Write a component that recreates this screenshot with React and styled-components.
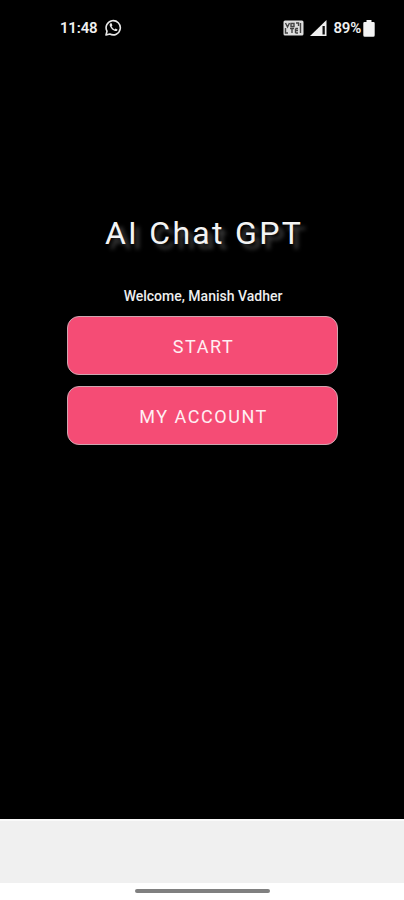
import React from "react";
import styled, { createGlobalStyle } from "styled-components";

const GlobalStyle = createGlobalStyle`
  * { box-sizing: border-box; }
  body { margin: 0; background: #fff; font-family: Roboto, sans-serif; }
`;

const Screen = styled.div`
  width: 404px;
  height: 900px;
  display: flex;
  flex-direction: column;
  background: #fff;
  overflow: hidden;
`;

const Main = styled.main`
  height: 819px;
  flex: none;
  background: #000;
  display: flex;
  flex-direction: column;
  align-items: center;
  color: #fff;
`;

const StatusBar = styled.header`
  width: 100%;
  height: 56px;
  padding: 0 29px 0 60px;
  display: flex;
  align-items: center;
  justify-content: space-between;
  color: #f0f0f0;
`;

const StatusGroup = styled.div`
  display: flex;
  align-items: center;
  gap: ${({ $gap }) => $gap}px;
  svg { display: block; flex: none; }
`;

const StatusText = styled.span`
  font-size: 15px;
  font-weight: 600;
  line-height: 18px;
  letter-spacing: ${({ $spacing }) => $spacing}px;
  white-space: nowrap;
`;

const Title = styled.h1`
  margin: 157px 0 0 4px;
  font-size: 32px;
  line-height: 40px;
  font-weight: 400;
  letter-spacing: 2.3px;
  color: #f4f4f4;
  white-space: nowrap;
  text-shadow: 5px 5px 4px rgba(255, 255, 255, 0.25);
`;

const Welcome = styled.p`
  margin: 35px 0 0 2px;
  font-size: 14px;
  font-weight: 500;
  line-height: 16px;
  white-space: nowrap;
  color: #eee;
`;

const Actions = styled.div`
  margin-top: 12px;
  width: 271px;
  margin-left: 1px;
  display: flex;
  flex-direction: column;
  gap: 11px;
`;

const ActionButton = styled.button`
  height: 59px;
  width: 100%;
  padding: 2px 0 0 2px;
  border: 1px solid #cfa5b0;
  border-radius: 12px;
  background: #f54c75;
  color: #ffeef2;
  font: 400 18px/24px Roboto, sans-serif;
  letter-spacing: 1.55px;
`;

const Footer = styled.footer`
  height: 64px;
  flex: none;
  background: #f0f0f0;
  border-top: 2px solid #fafafa;
`;

const NavigationArea = styled.div`
  flex: 1;
  display: flex;
  justify-content: center;
  padding-top: 6px;
`;

const HomeIndicator = styled.div`
  width: 135px;
  height: 4px;
  border-radius: 2px;
  background: #808080;
`;

function WhatsAppIcon() {
  return (
    <svg width="17" height="18" viewBox="0 0 17 18" fill="none">
      <path d="M1 16L2 12.2A7.1 7.1 0 1 1 4.8 15Z" stroke="#e8e8e8" strokeWidth="1.6" strokeLinejoin="round" />
      <path d="M5.5 4.3C4.4 5 4.5 6.3 5.1 7.5C6.3 9.9 7.8 11.3 10 12C11.3 12.4 12.5 11.8 12.5 10.4L10.5 9.4L9.5 10.4C8.2 9.8 7.2 8.8 6.6 7.6L7.4 6.5L6.6 4.3Z" fill="#e8e8e8" />
    </svg>
  );
}

function VolteIcon() {
  return (
    <svg width="21" height="16" viewBox="0 0 21 16" fill="none">
      <rect x=".5" y=".5" width="20" height="15" rx="1.5" fill="#dedede" />
      <path d="M2.5 3L4.5 7L6.5 3M8 3.5H11V6.5H8ZM2.5 8V13H5M7 8.5H11M9 8.5V13M12.5 8.5V13M12.5 8.5H15M12.5 10.5H15M12.5 13H15M13 3H15.5V6M17.5 3V13" stroke="#444" strokeWidth="1.4" />
    </svg>
  );
}

function SignalIcon() {
  return (
    <svg width="17" height="16" viewBox="0 0 17 16">
      <path d="M0 16L16.5 0V16Z" fill="#f0f0f0" />
      <path d="M12.5 6H14.8V14.5H12.5Z" fill="#101010" />
    </svg>
  );
}

function BatteryIcon() {
  return (
    <svg width="12" height="17" viewBox="0 0 12 17">
      <path d="M3.5 0H8.5V2H10.5Q11.7 2 11.7 3.2V15.2Q11.7 16.7 10.2 16.7H1.8Q.3 16.7 .3 15.2V3.2Q.3 2 1.5 2H3.5Z" fill="#f3f3f3" />
    </svg>
  );
}

export default function App() {
  return (
    <Screen>
      <GlobalStyle />
      <Main>
        <StatusBar>
          <StatusGroup $gap={8}>
            <StatusText $spacing={-0.2}>11:48</StatusText>
            <WhatsAppIcon />
          </StatusGroup>
          <StatusGroup $gap={6}>
            <VolteIcon />
            <SignalIcon />
            <StatusGroup $gap={2}>
              <StatusText $spacing={-0.2}>89%</StatusText>
              <BatteryIcon />
            </StatusGroup>
          </StatusGroup>
        </StatusBar>
        <Title>AI Chat GPT</Title>
        <Welcome>Welcome, Manish Vadher</Welcome>
        <Actions>
          <ActionButton>START</ActionButton>
          <ActionButton>MY ACCOUNT</ActionButton>
        </Actions>
      </Main>
      <Footer />
      <NavigationArea>
        <HomeIndicator />
      </NavigationArea>
    </Screen>
  );
}
